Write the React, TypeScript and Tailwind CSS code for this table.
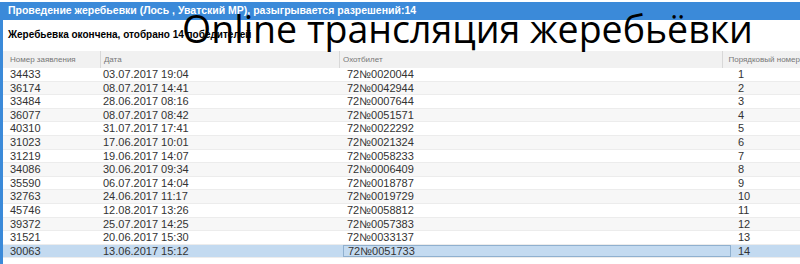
const rows: [string, string, string, string][] = [
  ["34433", "03.07.2017 19:04", "72№0020044", "1"],
  ["36174", "08.07.2017 14:41", "72№0042944", "2"],
  ["33484", "28.06.2017 08:16", "72№0007644", "3"],
  ["36077", "08.07.2017 08:42", "72№0051571", "4"],
  ["40310", "31.07.2017 17:41", "72№0022292", "5"],
  ["31023", "17.06.2017 10:01", "72№0021324", "6"],
  ["31219", "19.06.2017 14:07", "72№0058233", "7"],
  ["34086", "30.06.2017 09:34", "72№0006409", "8"],
  ["35590", "06.07.2017 14:04", "72№0018787", "9"],
  ["32763", "24.06.2017 11:17", "72№0019729", "10"],
  ["45746", "12.08.2017 13:26", "72№0058812", "11"],
  ["39372", "25.07.2017 14:25", "72№0057383", "12"],
  ["31521", "20.06.2017 15:30", "72№0033137", "13"],
  ["30063", "13.06.2017 15:12", "72№0051733", "14"],
];

export default function App() {
  return (
    <main
      className="relative h-[264px] w-[800px] overflow-hidden bg-white pt-[2px]"
      style={{ fontFamily: '"Liberation Sans", Arial, sans-serif' }}
    >
      <div className="flex h-[262px] flex-col border-l-[3px] border-[#3b8ad9]">
        {/* Title bar */}
        <div className="flex h-[18px] items-center bg-[#3b8ad9] pl-[5px] text-[10.5px] font-bold text-white">
          Проведение жеребьевки (Лось , Уватский МР), разыгрывается разрешений:14
        </div>

        {/* Status */}
        <div className="flex h-[31px] items-start pl-[5px] pt-[7px] text-[10px] font-bold text-black">
          Жеребьевка окончена, отобрано 14 победителей
        </div>

        {/* Header */}
        <div className="flex h-[17px] items-center bg-[#f1f1f1] text-[8px] text-[#777]">
          <div className="w-[98px] pl-[7px]">Номер заявления</div>
          <div className="h-full w-[242px] border-l border-[#d8d8d8] pl-[3px] pt-[3px]">Дата</div>
          <div className="h-full w-[388px] border-l border-[#d8d8d8] pl-[3px] pt-[3px]">Охотбилет</div>
          <div className="h-full flex-1 whitespace-nowrap border-l border-[#d8d8d8] pl-[5px] pt-[3px]">Порядковый номер</div>
        </div>

        {/* Rows */}
        <div className="flex flex-col text-[11px] text-[#333]">
          {rows.map((r, i) => {
            const selected = i === rows.length - 1;
            return (
              <div
                key={r[0]}
                className={
                  "flex h-[13.6px] items-center border-b border-[#ececec] " +
                  (selected ? "bg-[#c3daf0]" : i % 2 === 1 ? "bg-[#f7f7f7]" : "bg-white")
                }
              >
                <div className="w-[98px] pl-[7px]">{r[0]}</div>
                <div className="w-[242px] pl-[2px]">{r[1]}</div>
                <div
                  className={
                    "flex h-full w-[388px] items-center pl-[4px] " +
                    (selected ? "border border-[#8fb0cf]" : "")
                  }
                >
                  {r[2]}
                </div>
                <div className="flex-1 pl-[7px]">{r[3]}</div>
              </div>
            );
          })}
        </div>
      </div>

      {/* Overlay caption */}
      <div
        className="absolute left-[182px] top-[5px] whitespace-nowrap text-[37.5px] leading-[48px] text-black"
        style={{ fontFamily: '"Open Sans", sans-serif' }}
      >
        Online трансляция жеребьёвки
      </div>
    </main>
  );
}
